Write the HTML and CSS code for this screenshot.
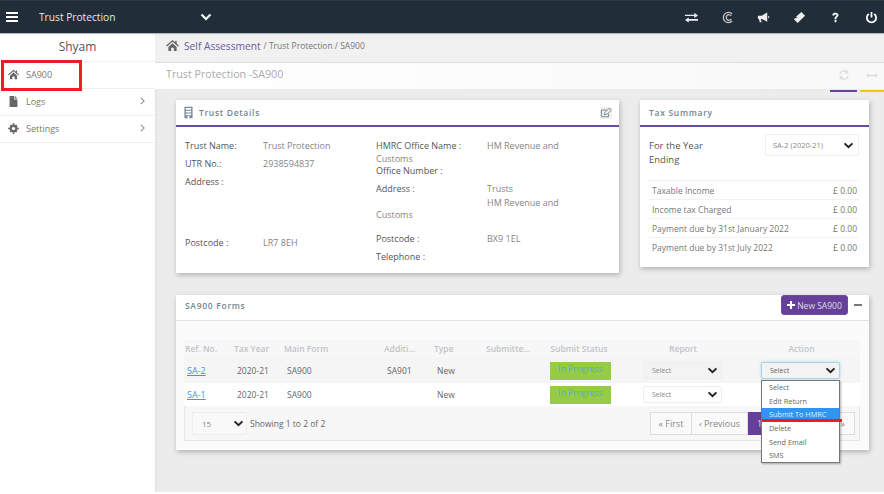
FILE: index.html
```html
<!DOCTYPE html>
<html lang="en">
<head>
<meta charset="utf-8">
<title>SA900</title>
<link rel="stylesheet" href="styles.css">
</head>
<body>
<header class="topbar">
  <svg class="burger" viewBox="0 0 12 10"><path d="M0 0h12v2H0zM0 4h12v2H0zM0 8h12v2H0z"/></svg>
  <span class="brand">Trust Protection</span>
  <svg class="brand-chev" viewBox="0 0 12 8"><path d="M1.500 1.500 6 6l4.500-4.500" fill="none" stroke="#fff" stroke-width="2.200"/></svg>
  <nav class="top-icons">
    <svg viewBox="0 0 14 12"><path d="M0 3h10V1l4 2.800-4 2.700V4.500H0zM14 7.500H4v-1.500L0 8.700 4 11.500V9.500h10z" fill="#eee"/></svg>
    <svg viewBox="0 0 14 14"><path d="M12 3.200A5.500 5.500 0 1 0 12 10.800M11 5.200A3 3 0 1 0 11 8.800" fill="none" stroke="#ccc" stroke-width="1.300"/></svg>
    <svg viewBox="0 0 14 12"><path d="M1 4h4l6-3.500v10L5 7.500H4l1 3.500H3L2 7.500H1zM12 4l1.500 1.500L12 7z" fill="#eee"/></svg>
    <svg viewBox="0 0 14 14"><path d="M9 1l4 4-8 8-4-4 1.500-1.500 1 .5.500-1-.5-1z" fill="#eee"/></svg>
    <svg viewBox="0 0 10 14"><path d="M1.500 4.500C1.800 2.500 3.300 2 5 2c1.800 0 3.200 1 3.200 2.700 0 2-2.300 2.100-2.300 3.800H4c0-2.700 2.200-2.700 2.200-3.800C6.200 4 5.700 3.700 5 3.700c-.8 0-1.300.5-1.500 1.300zM4 9.500h2V12H4z" fill="#fff"/></svg>
    <svg viewBox="0 0 14 14"><path d="M4 3.200a5 5 0 1 0 6 0M7 1v6" fill="none" stroke="#fff" stroke-width="1.900"/></svg>
  </nav>
</header>

<div class="shell">
  <aside class="sidebar">
    <div class="user">Shyam</div>
    <a class="side-item">
      <svg class="side-icon" viewBox="0 0 14 12"><path d="M7 0 0 6l1 1 6-5 6 5 1-1-2.500-2.200V.8H10v1.700zM2.500 7.500V12h3V8.500h3V12h3V7.500L7 3.500z" fill="#666"/></svg>
      <span>SA900</span>
    </a>
    <a class="side-item">
      <svg class="side-icon" viewBox="0 0 12 14"><path d="M1 0h6v4.500h4V14H1zM8 0l3 3.500H8z" fill="#666"/></svg>
      <span>Logs</span>
      <svg class="side-chev" viewBox="0 0 6 10"><path d="M1 1l4 4-4 4" fill="none" stroke="#888" stroke-width="1.300"/></svg>
    </a>
    <a class="side-item">
      <svg class="side-icon" viewBox="0 0 14 14"><circle cx="7" cy="7" r="3.800" fill="none" stroke="#666" stroke-width="2.600"/><path d="M6 0h2v14H6zM0 6h14v2H0zM2 3.400 3.400 2l8.600 8.600L10.600 12zM10.600 2 12 3.400 3.400 12 2 10.600z" fill="#666" opacity=".85"/><circle cx="7" cy="7" r="2" fill="#fff"/></svg>
      <span>Settings</span>
      <svg class="side-chev" viewBox="0 0 6 10"><path d="M1 1l4 4-4 4" fill="none" stroke="#888" stroke-width="1.300"/></svg>
    </a>
  </aside>

  <main class="main">
    <div class="crumbs">
      <svg class="crumb-home" viewBox="0 0 14 12"><path d="M7 0 0 6l1 1 6-5 6 5 1-1-2.500-2.200V.8H10v1.700zM2.500 7.500V12h3V8.500h3V12h3V7.500L7 3.500z" fill="#666"/></svg>
      <span class="crumb-link">Self Assessment</span>
      <span class="crumb-rest">/ Trust Protection / SA900</span>
    </div>
    <div class="titlebar">
      <span class="page-title">Trust Protection -SA900</span>
      <div class="title-tools">
        <div class="tool tool-purple">
          <svg viewBox="0 0 14 14"><path d="M2.500 6A4.600 4.600 0 0 1 10.800 4M11.500 8A4.600 4.600 0 0 1 3.200 10" fill="none" stroke="#ddd" stroke-width="1.600"/><path d="M12 1v4.500H7.500zM2 13V8.500h4.500z" fill="#ddd"/></svg>
        </div>
        <div class="tool tool-yellow">
          <svg viewBox="0 0 14 8"><path d="M0 4l3-3v2h8V1l3 3-3 3V5H3v2z" fill="#ddd"/></svg>
        </div>
      </div>
    </div>

    <div class="content">
      <div class="cards-top">
        <section class="card card-details">
          <div class="card-head purple-rule">
            <svg class="head-icon" viewBox="0 0 10 14"><path d="M.5.500h9v13h-9zM2 2v2h6V2zM2 5v2h6V5zM2 8v2h6V8zM4 11v2.500h2V11z" fill="#789" fill-rule="evenodd"/></svg>
            <h2>Trust Details</h2>
            <span class="edit-btn"><svg viewBox="0 0 14 12"><path d="M10 7v3.500H1.500v-8H8M5 8l.5-2.500L11 0l2.500 2.500L8 7.500z" fill="none" stroke="#7a8a95" stroke-width="1.200"/></svg></span>
          </div>
          <div class="details">
            <div class="col col-left">
              <div class="f f1"><span class="k">Trust Name:</span><span class="v">Trust Protection</span></div>
              <div class="f f2"><span class="k">UTR No.:</span><span class="v">2938594837</span></div>
              <div class="f f3"><span class="k">Address :</span></div>
              <div class="f f4"><span class="k">Postcode :</span><span class="v">LR7 8EH</span></div>
            </div>
            <div class="col col-right">
              <div class="f r1"><span class="k">HMRC Office Name :</span><span class="v">HM Revenue and</span></div>
              <div class="wrap">Customs</div>
              <div class="f r2"><span class="k">Office Number :</span></div>
              <div class="f r3"><span class="k">Address :</span><span class="v">Trusts</span></div>
              <div class="f r4"><span class="k"></span><span class="v">HM Revenue and</span></div>
              <div class="wrap">Customs</div>
              <div class="f r5"><span class="k">Postcode :</span><span class="v">BX9 1EL</span></div>
              <div class="f r6"><span class="k">Telephone :</span></div>
            </div>
          </div>
        </section>

        <section class="card card-tax">
          <div class="card-head purple-rule tax-head"><h2>Tax Summary</h2></div>
          <div class="tax-body">
            <div class="tax-year">
              <span class="year-label">For the Year Ending</span>
              <div class="sel sel-year"><span>SA-2 (2020-21)</span><svg viewBox="0 0 12 8"><path d="M1.500 1.500 6 6l4.500-4.500" fill="none" stroke="#222" stroke-width="2.200"/></svg></div>
            </div>
            <div class="tax-row"><span class="row-a">Taxable Income</span><span>£ 0.00</span></div>
            <div class="tax-row"><span class="row-b">Income tax Charged</span><span>£ 0.00</span></div>
            <div class="tax-row"><span class="row-b">Payment due by 31st January 2022</span><span>£ 0.00</span></div>
            <div class="tax-row"><span class="row-b">Payment due by 31st July 2022</span><span>£ 0.00</span></div>
          </div>
        </section>
      </div>

      <section class="card card-forms">
        <div class="forms-head">
          <h2>SA900 Forms</h2>
          <button class="new-btn"><svg viewBox="0 0 10 10"><path d="M3.700 0h2.600v3.700H10v2.600H6.300V10H3.700V6.300H0V3.700h3.700z" fill="#fff"/></svg>New SA900</button>
          <span class="minus"></span>
        </div>
        <div class="forms-body">
          <div class="grid-row grid-header">
            <span class="th-first">Ref. No.</span><span>Tax Year</span><span>Main Form</span><span>Additi...</span><span>Type</span><span>Submitte...</span><span class="th-c th-status">Submit Status</span><span class="th-c th-side">Report</span><span class="th-c th-side">Action</span>
          </div>
          <div class="grid-row grid-data row-grey">
            <a class="ref">SA-2</a><span>2020-21</span><span>SA900</span><span>SA901</span><span>New</span><span></span>
            <span class="status">In Progress</span>
            <div class="sel sel-table sel-grey"><span>Select</span><svg viewBox="0 0 12 8"><path d="M1.500 1.500 6 6l4.500-4.500" fill="none" stroke="#222" stroke-width="2.200"/></svg></div>
            <div class="sel sel-table sel-focus"><span>Select</span><svg viewBox="0 0 12 8"><path d="M1.500 1.500 6 6l4.500-4.500" fill="none" stroke="#222" stroke-width="2.200"/></svg></div>
          </div>
          <div class="grid-row grid-data row-white">
            <a class="ref">SA-1</a><span>2020-21</span><span>SA900</span><span></span><span>New</span><span></span>
            <span class="status">In Progress</span>
            <div class="sel sel-table"><span>Select</span><svg viewBox="0 0 12 8"><path d="M1.500 1.500 6 6l4.500-4.500" fill="none" stroke="#222" stroke-width="2.200"/></svg></div>
            <span></span>
          </div>
          <div class="table-foot">
            <div class="sel sel-page"><span>15</span><svg viewBox="0 0 12 8"><path d="M1.500 1.500 6 6l4.500-4.500" fill="none" stroke="#222" stroke-width="2.200"/></svg></div>
            <span class="showing">Showing 1 to 2 of 2</span>
            <div class="pager">
              <span class="pg pg-first">« First</span>
              <span class="pg pg-prev">‹ Previous</span>
              <span class="pg pg-on">1</span>
              <span class="pg pg-last">»</span>
            </div>
          </div>
        </div>
      </section>
    </div>
  </main>
</div>

<div class="menu">
  <div>Select</div>
  <div>Edit Return</div>
  <div class="menu-on">Submit To HMRC</div>
  <div>Delete</div>
  <div>Send Email</div>
  <div>SMS</div>
</div>
<div class="mark-line"></div>
<div class="mark-box"></div>
<div class="page-end"></div>
</body>
</html>
```

FILE: styles.css
```css
* { box-sizing: border-box; }
html, body { margin: 0; height: 494px; overflow: hidden; }
body { font-family: "Open Sans", "Liberation Sans", sans-serif; font-size: 10px; color: #555; background: #ececec; position: relative; }

.topbar { height: 33px; background: #222d3a; border-top: 1px solid #2e3947; display: flex; align-items: center; color: #fff; box-shadow: 0 1px 1px #bbb; position: relative; }
.burger { width: 12px; height: 10px; margin-left: 6px; fill: #fff; }
.brand { margin-left: 21px; font-size: 10.200px; color: #e8e8e8; width: 161px; }
.brand-chev { width: 12px; height: 8px; }
.top-icons { margin-left: auto; display: flex; align-items: center; }
.top-icons svg { position: relative; width: 13px; height: 13px; margin-right: 23px; }
.top-icons svg:last-child { margin-right: 6px; }

.shell { display: flex; height: 459px; }
.sidebar { width: 155px; flex: none; background: #fff; box-shadow: 1px 0 2px #ddd; }
.user { height: 29px; text-align: center; font-size: 12px; line-height: 27px; color: #555; border-bottom: 1px solid #f2f2f2; }
.side-item { height: 27px; display: flex; align-items: center; padding: 0 10px 2px 8px; border-bottom: 1px solid #eee; font-size: 9px; color: #777; }
.side-icon { width: 11px; height: 11px; margin-right: 7px; }
.side-chev { width: 5px; height: 8px; margin-left: auto; margin-right: 0; }

.main { flex: 1; min-width: 0; }
.crumbs { height: 30px; background: #f1f1f1; border-bottom: 1px solid #ddd; display: flex; align-items: center; padding: 0 0 4px 11px; }
.crumb-home { width: 13px; height: 11px; margin-right: 5px; }
.crumb-link { font-size: 10.200px; color: #6d5aa0; margin-right: 3px; }
.crumb-rest { font-size: 8.500px; color: #777; }
.titlebar { height: 27px; background: linear-gradient(90deg, #fff, #f8f8f8); border-bottom: 1px solid #eaeaea; display: flex; align-items: center; padding: 0 0 4px 11px; position: relative; }
.page-title { font-size: 10.700px; color: #aaa; }
.title-tools { margin-left: auto; display: flex; gap: 3px; align-self: flex-start; }
.tool { height: 29px; display: flex; align-items: center; justify-content: center; }
.tool svg { margin-bottom: 3px; }
.tool-purple { width: 27px; border-bottom: 2px solid #6a3f9e; }
.tool-purple svg { width: 12px; height: 12px; }
.tool-yellow { width: 24px; border-bottom: 2px solid #f5c518; }
.tool-yellow svg { width: 12px; height: 7px; }

.content { padding: 10px 15px 0 21px; }
.cards-top { display: flex; gap: 21px; align-items: flex-start; }
.card { background: #fff; box-shadow: 1px 2px 5px rgba(0,0,0,.25); }
.card h2 { margin: 0; font-size: 8.500px; font-weight: 600; letter-spacing: .7px; color: #708794; }
.card-details { width: 443px; height: 173px; }
.card-tax { width: 229px; height: 167px; }
.card-head { height: 27px; display: flex; align-items: center; padding-left: 8px; }
.purple-rule { border-bottom: 2px solid #6a4da0; }
.tax-head { padding-left: 9px; }
.head-icon { width: 9px; height: 13px; margin-right: 6px; }
.edit-btn { margin-left: auto; margin-right: 7px; width: 12px; height: 12px; background: #f0f0f0; display: flex; align-items: center; border-radius: 2px; }
.edit-btn svg { width: 12px; height: 10px; }

.details { display: flex; font-size: 9px; }
.col-left { width: 200px; padding: 13px 0 0 9px; }
.col-right { padding: 13px 0 0 0; }
.f { display: flex; line-height: 12px; }
.k { color: #555; display: block; }
.v { color: #858585; display: block; }
.col-left .k { width: 78px; }
.col-right .k { width: 111px; }
.f2 { margin-top: 6px; }
.f3 { margin-top: 6px; }
.f4 { margin-top: 49px; }
.wrap { color: #858585; line-height: 12px; }
.r1 { margin-bottom: .5px; }
.r2 { margin-top: .5px; }
.r3 { margin-top: 6px; }
.r4 { margin-top: 2px; }
.r5 { margin-top: 12px; }
.r6 { margin-top: 6px; }

.tax-body { padding: 7px 10px 0 9px; }
.tax-year { display: flex; justify-content: space-between; height: 47px; font-size: 9.500px; color: #555; border-bottom: 1px solid #eee; }
.year-label { width: 70px; line-height: 14px; margin-top: 5px; }
.tax-row { height: 19px; display: flex; justify-content: space-between; align-items: center; padding: 0 2px 0 3px; border-bottom: 1px solid #f2f2f2; font-size: 8.500px; color: #777; }
.tax-row:last-child { border-bottom: 0; }

.sel { display: flex; align-items: center; justify-content: space-between; border: 1px solid #eee; border-radius: 2px; background: #fff; color: #888; font-size: 7.500px; }
.sel svg { width: 11px; height: 7px; flex: none; }
.sel-year { width: 94px; height: 22px; padding: 0 4px 0 7px; }
.sel-table { width: 79px; height: 17px; padding: 0 3px 0 8px; font-size: 7px; }
.sel-grey { background: #f3f3f3; }
.sel-focus { background: #f3f3f3; border-color: #a8d4ee; box-shadow: 0 0 3px #a8d4ee; color: #666; }
.sel-page { width: 55px; height: 23px; padding: 0 2px 0 9px; background: #f9f9f9; font-size: 8px; }

.card-forms { margin-top: 22px; width: 693px; height: 155px; }
.forms-head { height: 26px; background: #fff; border-bottom: 1px solid #e2e2e2; display: flex; align-items: center; padding: 0 7px 5px 9px; }
.new-btn { margin-left: auto; width: 67px; height: 20px; padding: 0; border: 1px solid #6a4da0; border-radius: 3px; background: #663f9b; color: #ddd; font: 8.500px "Open Sans", sans-serif; display: flex; align-items: center; justify-content: center; gap: 2px; }
.new-btn svg { width: 8px; height: 8px; }
.minus { width: 8px; height: 2px; background: #777; margin-left: 6px; }
.forms-body { padding: 19px 9px 0 8px; background: #fbfbfb; height: 128px; }
.grid-row { display: grid; grid-template-columns: 50px 50px 100px 50px 52px 60px 78px 122px 115px; align-items: center; }
.grid-header { height: 18px; padding-bottom: 2px; background: #f7f7f7; color: #c0c4c8; font-size: 8.500px; font-weight: 600; }
.grid-header .th-first { padding-left: 1px; }
.grid-header .th-c { text-align: center; }
.grid-header .th-status { padding-right: 12px; }
.grid-header .th-side { padding-right: 4px; }
.grid-data { font-size: 8.500px; color: #666; }
.grid-data > span { padding-left: 3px; }
.row-grey { height: 25px; background: #f5f5f5; }
.row-white { height: 23px; background: #fff; }
.ref { color: #4a90e2; text-decoration: underline; padding-left: 3px; font-size: 9px; }
.grid-data .status { width: 61px; height: 18px; margin-left: 4px; padding: 0; background: #96cc45; color: #5ba7d8; text-align: center; font-size: 8.500px; line-height: 14px; }
.grid-data .sel { margin-left: 19px; }
.grid-data .sel-focus { margin-left: 15px; }
.table-foot { height: 35px; border: 1px solid #e6e6e6; border-top: 0; display: flex; align-items: center; padding-left: 7px; background: #f7f7f7; }
.showing { margin-left: 3px; font-size: 8.500px; color: #666; }
.pager { margin-left: auto; margin-right: 4px; display: flex; height: 23px; }
.pg { display: flex; align-items: center; justify-content: center; background: #fafafa; border: 1px solid #ddd; border-left: 0; font-size: 9px; color: #888; }
.pg-first { width: 42px; border-left: 1px solid #ddd; }
.pg-prev { width: 56px; }
.pg-on { width: 24px; background: #663f9b; border-color: #663f9b; color: #ddd; justify-content: flex-start; padding-left: 9px; }
.pg-last { width: 83px; justify-content: flex-end; padding-right: 9px; }

.menu { position: absolute; left: 761px; top: 380px; width: 79px; height: 83px; background: #fff; border: 1px solid #777; box-shadow: 1px 1px 2px rgba(0,0,0,.3); font-size: 7.300px; color: #666; }
.menu div { height: 13.650px; line-height: 12.500px; padding-left: 7px; }
.menu .menu-on { background: #2f95f5; color: #dfeeff; }
.mark-line { position: absolute; left: 762px; top: 419px; width: 80px; height: 3px; background: #ee1c25; }
.mark-box { position: absolute; left: 1px; top: 60px; width: 81px; height: 31px; border: 3px solid #ee1c25; }
.page-end { position: absolute; left: 0; right: 0; top: 492px; height: 2px; background: #fff; }
```
